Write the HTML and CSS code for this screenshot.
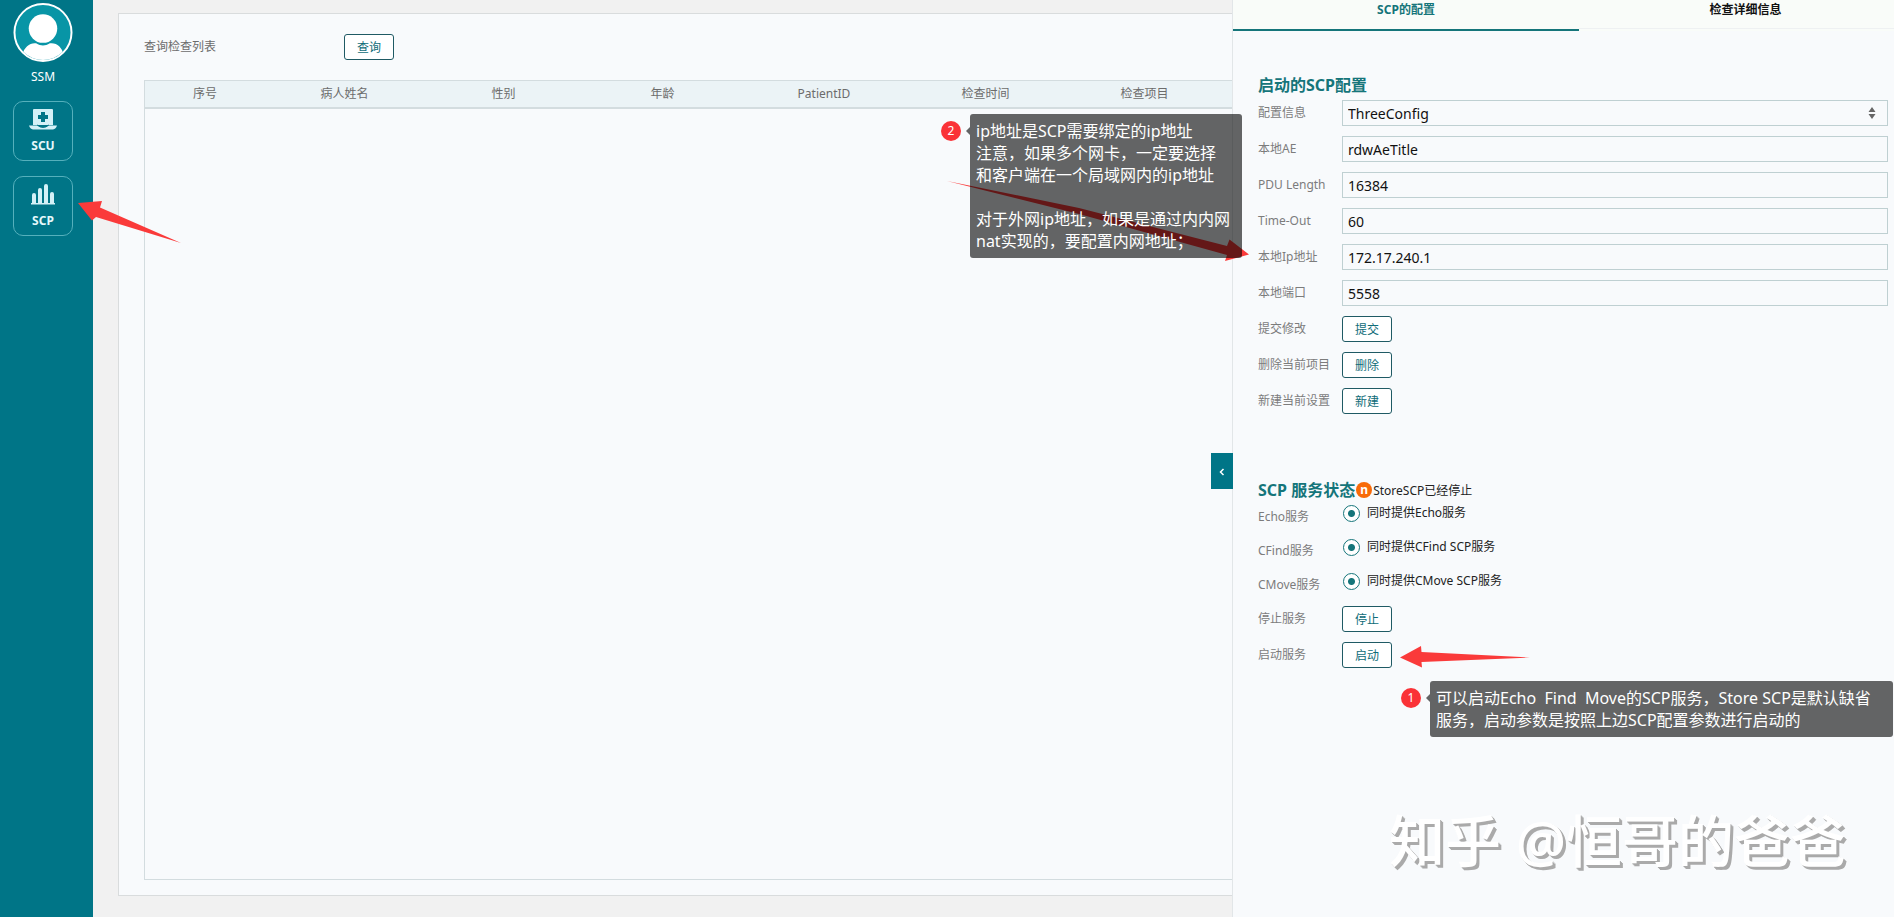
FILE: index.html
```html
<!DOCTYPE html>
<html lang="zh-CN">
<head>
<meta charset="utf-8">
<title>SCP的配置</title>
<link rel="stylesheet" href="styles.css">
</head>
<body>
<div class="app">
  <nav class="sidebar">
    <div class="user">
      <svg class="avatar" viewBox="0 0 60 60" aria-hidden="true">
        <defs><clipPath id="face"><circle cx="30" cy="30" r="28"/></clipPath></defs>
        <circle cx="30" cy="30" r="29" fill="#0895a6" stroke="#fff" stroke-width="2"/>
        <circle cx="30" cy="26" r="14.500" fill="#fff"/>
        <path clip-path="url(#face)" fill="#fff" d="M9 52c2-7 8-12 14-11 5 3 9 3 14 0 7-1 12 4 14 11l-8 8H17z"/>
      </svg>
      <span>SSM</span>
    </div>
    <a class="nav-item" href="#scu">
      <svg class="nav-icon" viewBox="0 0 28 22" aria-hidden="true">
        <path fill="#d3f1f7" fill-rule="evenodd" d="M5 0h18q1 0 1 1v15H4V1q0-1 1-1zM12 3v3H9v4h3v3h4v-3h3V6h-3V3z"/>
        <path fill="#d3f1f7" d="M0 16.500h8q6 4.500 12 0h8q-1 3.500-4 4H4q-3-.5-4-4z"/>
        <path fill="none" stroke="#007587" stroke-width="1" d="M8.500 16q5.500 4.500 11 0"/>
      </svg>
      <span>SCU</span>
    </a>
    <a class="nav-item" href="#scp">
      <svg class="nav-icon" viewBox="0 0 28 22" aria-hidden="true">
        <path fill="#d3f1f7" d="M3 19v-8q0-2 2-2t2 2v8zM9 19V6q0-2 2-2t2 2v13zM15 19V2q0-2 2-2t2 2v17zM21 19v-9q0-2 2-2t2 2v9zM2 19h24v1.500H2z"/>
      </svg>
      <span>SCP</span>
    </a>
  </nav>

  <main class="main">
    <section class="panel">
      <div class="query">
        <span class="query-label">查询检查列表</span>
        <button class="btn" type="button">查询</button>
      </div>
      <div class="grid">
        <table>
          <colgroup><col class="c-no"><col class="c-std"><col class="c-std"><col class="c-std"><col class="c-id"><col class="c-std"><col></colgroup>
          <thead>
            <tr><th>序号</th><th>病人姓名</th><th>性别</th><th>年龄</th><th>PatientID</th><th>检查时间</th><th class="last">检查项目</th></tr>
          </thead>
        </table>
      </div>
    </section>
  </main>

  <aside class="drawer">
    <button class="handle" type="button" aria-label="收起">
      <svg viewBox="0 0 6 8" aria-hidden="true"><path d="M4.500 1 1.500 4l3 3" fill="none" stroke="#fff" stroke-width="1.500"/></svg>
    </button>
    <div class="tabs" role="tablist">
      <button class="tab active" type="button" role="tab" aria-selected="true">SCP的配置</button>
      <button class="tab" type="button" role="tab" aria-selected="false">检查详细信息</button>
    </div>

    <form class="section config">
      <h2>启动的SCP配置</h2>
      <div class="row"><label for="cfg">配置信息</label>
        <div class="select"><select id="cfg"><option>ThreeConfig</option></select>
          <svg viewBox="0 0 8 12" aria-hidden="true"><path fill="#666" d="M4 0 7.500 5h-7zM4 12 .5 7h7z"/></svg></div></div>
      <div class="row"><label for="ae">本地AE</label><input class="field" id="ae" type="text" value="rdwAeTitle"></div>
      <div class="row"><label for="pdu">PDU Length</label><input class="field" id="pdu" type="text" value="16384"></div>
      <div class="row"><label for="timeout">Time-Out</label><input class="field" id="timeout" type="text" value="60"></div>
      <div class="row"><label for="ip">本地Ip地址</label><input class="field" id="ip" type="text" value="172.17.240.1"></div>
      <div class="row"><label for="port">本地端口</label><input class="field" id="port" type="text" value="5558"></div>
      <div class="row"><label for="submit">提交修改</label><button class="btn" id="submit" type="button">提交</button></div>
      <div class="row"><label for="remove">删除当前项目</label><button class="btn" id="remove" type="button">删除</button></div>
      <div class="row"><label for="create">新建当前设置</label><button class="btn" id="create" type="button">新建</button></div>
    </form>

    <form class="section">
      <div class="status">
        <h2>SCP 服务状态</h2>
        <span class="dot">n</span>
        <span class="state">StoreSCP已经停止</span>
      </div>
      <div class="services">
        <div class="service"><span class="name">Echo服务</span><label class="radio"><input type="radio" name="echo" checked>同时提供Echo服务</label></div>
        <div class="service"><span class="name">CFind服务</span><label class="radio"><input type="radio" name="cfind" checked>同时提供CFind SCP服务</label></div>
        <div class="service"><span class="name">CMove服务</span><label class="radio"><input type="radio" name="cmove" checked>同时提供CMove SCP服务</label></div>
      </div>
      <div class="row"><label for="stop">停止服务</label><button class="btn" id="stop" type="button">停止</button></div>
      <div class="row"><label for="start">启动服务</label><button class="btn" id="start" type="button">启动</button></div>
    </form>
  </aside>
</div>

<svg class="arrows" aria-hidden="true">
  <path d="M78 203 102 201 100 207.500 181 243 96 217 92 220.500z"/>
  <path d="M947 181 1079 208 1227 246 1229.500 239.500 1249 254.500 1225 261 1227 255 1079 214z"/>
  <path d="M1400 657.500 1421 646 1421.500 652 1530 657.500 1421.500 662 1422 667.500z"/>
</svg>
<div class="note note-ip">
  <span class="num">2</span>
  <p>ip地址是SCP需要绑定的ip地址
注意，如果多个网卡，一定要选择
和客户端在一个局域网内的ip地址

对于外网ip地址，如果是通过内内网
nat实现的，要配置内网地址；</p>
</div>
<div class="note note-start">
  <span class="num">1</span>
  <p>可以启动Echo  Find  Move的SCP服务，Store SCP是默认缺省
服务，启动参数是按照上边SCP配置参数进行启动的</p>
</div>
<div class="watermark">知乎 @恒哥的爸爸</div>
</body>
</html>
```
FILE: styles.css
```css
* { box-sizing: border-box; }

body {
  margin: 0;
  font: 12px/18px "Noto Sans", "Noto Sans CJK SC", sans-serif;
  color: #222;
  background: #f1f1f1;
  overflow: hidden;
}

button, input, select { font-family: inherit; }

.app {
  display: flex;
  height: 100vh;
}

/* sidebar */
.sidebar {
  flex: 0 0 93px;
  display: flex;
  flex-direction: column;
  gap: 15px;
  padding: 3px 20px 0 13px;
  background: #007587;
  color: #fff;
}

.user {
  display: flex;
  flex-direction: column;
  align-items: center;
  gap: 6px;
  height: 83px;
}

.avatar {
  display: block;
  width: 60px;
  height: 60px;
}

.nav-item {
  display: flex;
  flex-direction: column;
  align-items: center;
  gap: 6px;
  height: 60px;
  padding-top: 7px;
  border: 1px solid #55b0bc;
  border-radius: 10px;
  color: #e4f8fb;
  font-weight: bold;
  text-decoration: none;
}

.nav-icon {
  width: 28px;
  height: 22px;
}

/* list */
.main {
  flex: 1;
  min-width: 0;
  display: flex;
  padding: 13px 0 21px 25px;
}

.panel {
  flex: 1;
  display: flex;
  flex-direction: column;
  padding: 20px 0 15px 25px;
  border: 1px solid #d9dcdd;
  border-right: 0;
  background: #f8fafc;
}

.query {
  display: flex;
  align-items: center;
  padding-bottom: 20px;
}

.query-label {
  width: 200px;
  color: #6c6c6c;
}

.btn {
  width: 50px;
  height: 26px;
  padding: 0;
  border: 1px solid #1f5a64;
  border-radius: 3px;
  background: #fff;
  color: #0f6c78;
  font-size: 12px;
}

.grid {
  flex: 1;
  border: 1px solid #d3dcdf;
  border-right: 0;
}

table {
  width: 100%;
  table-layout: fixed;
  border-collapse: separate;
  border-spacing: 0;
}

.c-no { width: 120px; }
.c-std { width: 159px; }
.c-id { width: 164px; }

th {
  height: 28px;
  padding: 0;
  border-bottom: 2px solid #d3dcdf;
  background: #ebf3f6;
  color: #6c6c6c;
  font-weight: normal;
}

th.last { padding-right: 8px; }

/* drawer */
.drawer {
  position: relative;
  flex: 0 0 662px;
  border-left: 1px solid #e2e6e8;
  background: #f8fafc;
}

.handle {
  position: absolute;
  left: -22px;
  top: 453px;
  width: 22px;
  height: 36px;
  padding: 0;
  border: 0;
  background: #007587;
}

.handle svg {
  width: 6px;
  height: 8px;
}

.tabs {
  display: flex;
  background: #f9fcf9;
}

.tab {
  flex: 1;
  height: 29px;
  padding: 0 0 10px 18px;
  border: 0;
  border-bottom: 1px solid #eef1f2;
  background: none;
  color: #111;
  font-size: 12px;
  font-weight: bold;
}

.tab.active {
  flex: 0 0 346px;
  height: 31px;
  padding: 0 0 12px;
  border-bottom: 2px solid #15757a;
  color: #15757a;
}

.section { padding: 0 6px 0 25px; }

.config { padding-top: 42px; }

h2 {
  margin: 0;
  color: #15757a;
  font-size: 16px;
  line-height: 24px;
}

.config h2 { padding-bottom: 3px; }

.row {
  display: flex;
  align-items: center;
  height: 26px;
  margin-bottom: 10px;
  color: #7c7c7c;
}

.row > label, .name {
  flex: 0 0 84px;
  white-space: nowrap;
}

.field, .select {
  flex: 1;
  min-width: 0;
  height: 26px;
  border: 1px solid #bfd0d2;
  background: #f8fafc;
}

.field, select {
  padding: 0 5px;
  color: #111;
  font-size: 14px;
}

.select { position: relative; }

select {
  display: block;
  width: 100%;
  height: 24px;
  border: 0;
  background: none;
  appearance: none;
}

.select svg {
  position: absolute;
  right: 11px;
  top: 6px;
  width: 8px;
  height: 12px;
  pointer-events: none;
}

.status {
  display: flex;
  align-items: center;
  padding-top: 54px;
}

.dot {
  width: 16px;
  height: 16px;
  margin: 0 1px;
  border-radius: 50%;
  background: #f86a08;
  color: #fff;
  font-weight: bold;
  line-height: 15px;
  text-align: center;
}

.state { padding-top: 2px; }

.services { padding-bottom: 2px; }

.service {
  display: flex;
  height: 34px;
}

.name {
  padding-top: 6px;
  color: #7c7c7c;
}

.radio {
  display: flex;
  align-items: center;
  gap: 7px;
  height: 22px;
}

.radio input {
  width: 17px;
  height: 17px;
  margin: 0 0 0 1px;
  border: 1px solid #15757a;
  border-radius: 50%;
  background: radial-gradient(circle, #15757a 3px, #fff 4px);
  appearance: none;
}

/* annotations laid over the page */
.arrows {
  position: absolute;
  left: 0;
  top: 0;
  width: 100%;
  height: 100%;
  fill: #fa3a3a;
  pointer-events: none;
}

.note {
  position: absolute;
  display: flex;
  align-items: flex-start;
  gap: 9px;
}

.note-ip { left: 941px; top: 114px; }
.note-start { left: 1401px; top: 681px; }

.num {
  width: 20px;
  height: 20px;
  margin-top: 7px;
  border-radius: 50%;
  background: #fa3237;
  color: #fff;
  line-height: 20px;
  text-align: center;
}

.note p {
  position: relative;
  margin: 0;
  padding: 6px 12px 6px 6px;
  border-radius: 3px;
  background: rgba(0, 0, 0, 0.6);
  color: #fff;
  font-size: 16px;
  line-height: 22px;
  white-space: pre;
}

.note-start p { padding-right: 22px; }

.note p::before {
  content: "";
  position: absolute;
  left: -4px;
  top: 13px;
  border: 4px solid transparent;
  border-left: 0;
  border-right-color: rgba(0, 0, 0, 0.6);
}

.watermark {
  position: absolute;
  right: 48px;
  bottom: 37px;
  color: #fff;
  font-size: 56px;
  font-weight: 500;
  line-height: 80px;
  white-space: nowrap;
  text-shadow: 1px 1px 0 #aaa, 2px 2px 0 #aaa, 3px 3px 0 #aaa;
}
```
